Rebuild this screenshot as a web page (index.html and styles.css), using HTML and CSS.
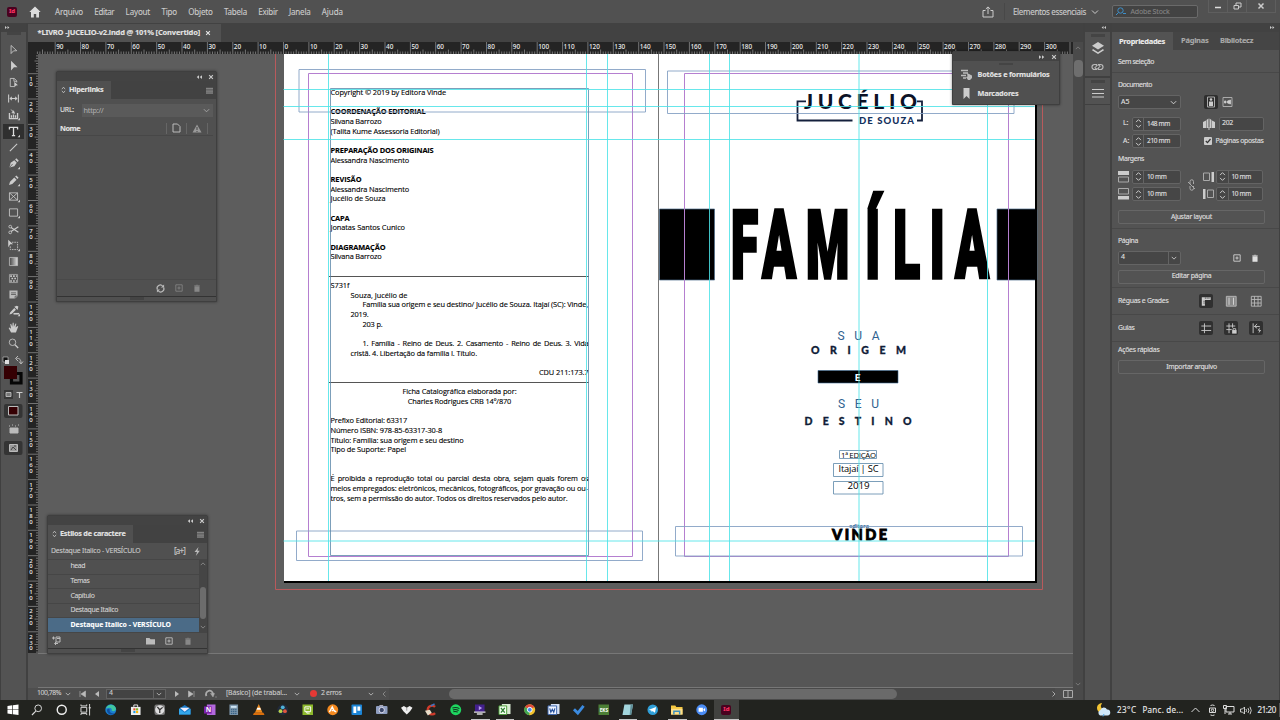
FILE: index.html
```html
<!DOCTYPE html>
<html lang="pt-BR">
<head>
<meta charset="utf-8">
<title>LIVRO -JUCELIO-v2.indd</title>
<link rel="stylesheet" href="styles.css">
</head>
<body>

<svg class="symbols">
  <symbol id="chev" viewBox="0 0 8 8"><path d="M1 2.500l3 3 3-3" fill="none" stroke="currentColor"/></symbol>
  <symbol id="close" viewBox="0 0 8 8"><path d="M1.500 1.500l5 5M6.500 1.500l-5 5" stroke="currentColor" stroke-width="1.500"/></symbol>
  <symbol id="dleft" viewBox="0 0 8 8"><path d="M4 1.500v5L1 4zM8 1.500v5L5 4z" fill="currentColor"/></symbol>
  <symbol id="dright" viewBox="0 0 8 8"><path d="M0 1.500v5L3 4zM4 1.500v5L7 4z" fill="currentColor"/></symbol>
  <symbol id="menu" viewBox="0 0 8 8"><path d="M0 1.500h8M0 3.500h8M0 5.500h8M0 7h8" stroke="currentColor" stroke-width=".9"/></symbol>
  <symbol id="updown" viewBox="0 0 6 10"><path d="M1 4l2-2.500L5 4M1 6l2 2.500L5 6" fill="none" stroke="currentColor" stroke-width=".8"/></symbol>
  <symbol id="spin" viewBox="0 0 10 14"><path d="M1.500 5L5 1.500 8.500 5M1.500 9L5 12.500 8.500 9" fill="none" stroke="currentColor" stroke-width="1.200"/></symbol>
  <symbol id="plus" viewBox="0 0 10 10"><path d="M1 1h8v8H1zM5 3v4M3 5h4" fill="none" stroke="currentColor"/></symbol>
  <symbol id="trash" viewBox="0 0 10 10"><path d="M1.500 2h7M3.500 1.500h3M2.200 3h5.600v6.500H2.200z" fill="currentColor" stroke="currentColor" stroke-width=".7"/></symbol>
</svg>

<div class="menubar">
  <div class="id-logo">Id</div>
  <svg class="home" viewBox="0 0 12 12"><path d="M6 .5L.3 6H2v5.500h2.800V8h2.400v3.500H10V6h1.700z" fill="#ddd"/></svg>
  <div class="menus">
    <span data-w="28">Arquivo</span><span data-w="20">Editar</span><span data-w="24.500">Layout</span><span data-w="15.500">Tipo</span><span data-w="24.500">Objeto</span><span data-w="23">Tabela</span><span data-w="19.500">Exibir</span><span data-w="21.500">Janela</span><span data-w="21">Ajuda</span>
  </div>
  <svg class="share" viewBox="0 0 12 12"><path d="M3.500 4.500H1v6.500h10V4.500H8.500M6 8V1M3.800 3L6 .9 8.200 3" fill="none" stroke="#ccc"/></svg>
  <div class="workspace"><span data-w="73">Elementos essenciais</span><svg width="8" height="8"><use href="#chev"/></svg></div>
  <div class="stock"><svg width="12" height="9" viewBox="0 0 12 9"><circle cx="5.500" cy="3.500" r="2.700" fill="none" stroke="#3d8fc9"/><path d="M3.500 5.500L1 8M8 6.500h3" stroke="#3d8fc9"/></svg><span data-w="39">Adobe Stock</span></div>
  <div class="winbtns">
    <span><svg width="8" height="8"><path d="M1 5.500h6" stroke="#ddd" stroke-width="1.500"/></svg></span>
    <span><svg width="9" height="8"><path d="M1 3.500h4.500v3.500H1zM3 3V1h5v4H6" fill="none" stroke="#ccc"/></svg></span>
    <span><svg width="8" height="8"><use href="#close"/></svg></span>
  </div>
</div>

<div class="main">
  <div class="toolcol">
    <div class="colhead left"><svg width="5" height="5"><use href="#dright"/></svg></div>
    <i class="grip"></i>
    <div class="tools">
      <svg viewBox="0 0 16 16"><path d="M5 3l7 6.500-4 .2L5 13z" fill="none" stroke="#ccc"/></svg>
      <svg viewBox="0 0 16 16"><path d="M5 2l8 8-4.500.3L5 14z" fill="#ccc"/></svg>
      <svg viewBox="0 0 16 16"><path d="M9 13H4V3h5l3 3v2M8.500 3v3.500H12" fill="none" stroke="#ccc"/><path d="M9 7l4.500 4.500-2.500.2L9 14z" fill="#ccc"/></svg>
      <svg viewBox="0 0 16 16"><path d="M2 3v10M14 3v10M4 8h8M6 6L4 8l2 2M10 6l2 2-2 2" fill="none" stroke="#ccc" stroke-width="1.300"/></svg>
      <svg viewBox="0 0 16 16"><path d="M3 6v7h10V6M5.500 12V9M8 12V8M10.500 12V9" fill="none" stroke="#ccc" stroke-width="1.600"/><path d="M4 1l4 3V2l2 5-5-1 2-1z" fill="#ccc"/><path d="M16 12v3h-3z" fill="#ccc"/></svg>
      <svg class="on" viewBox="0 0 16 16"><path d="M3 5.500V3h10v2.500M8 3v10M6 13h4" fill="none" stroke="#ddd" stroke-width="1.600"/><path d="M16 12v3h-3z" fill="#ccc"/></svg>
      <svg viewBox="0 0 16 16"><path d="M3.500 12.500l9-9" stroke="#ccc" stroke-width="1.300"/></svg>
      <svg viewBox="0 0 16 16"><path d="M3 13l1.500-6L9 4l3 3-3 4.500zM10 3l1.500-1.500 3 3L13 6z" fill="#ccc"/><path d="M3 13l4-4.500" stroke="#535353"/><path d="M16 12v3h-3z" fill="#ccc"/></svg>
      <svg viewBox="0 0 16 16"><path d="M2.500 13.500l1.200-4L9 4.200 11.800 7 6.500 12.300zM10 3.200l1.500-1.500 2.800 2.800L12.800 6z" fill="#ccc"/><path d="M16 12v3h-3z" fill="#ccc"/></svg>
      <svg viewBox="0 0 16 16"><path d="M3 3.500h10v9H3zM3 3.500l10 9M13 3.500l-10 9" fill="none" stroke="#ccc"/><path d="M16 12v3h-3z" fill="#ccc"/></svg>
      <svg viewBox="0 0 16 16"><path d="M3 3.500h10v9H3z" fill="none" stroke="#ccc"/><path d="M16 12v3h-3z" fill="#ccc"/></svg>
      <svg viewBox="0 0 16 16"><path d="M5 5.500l9 6M5 10.500l9-6" stroke="#ccc" stroke-width="1.400"/><circle cx="4" cy="4.500" r="1.700" fill="none" stroke="#ccc"/><circle cx="4" cy="11.500" r="1.700" fill="none" stroke="#ccc"/></svg>
      <svg viewBox="0 0 16 16"><path d="M1.500 1l6 5.500H4L1.500 10z" fill="#ccc"/><path d="M6 4h7v9H4V9" fill="none" stroke="#ccc" stroke-dasharray="2 1"/><path d="M16 12v3h-3z" fill="#ccc"/></svg>
      <svg viewBox="0 0 16 16"><defs><linearGradient id="g"><stop stop-color="#444"/><stop offset="1" stop-color="#ddd"/></linearGradient></defs><path d="M3 3h10v10H3z" fill="url(#g)" stroke="#bbb"/></svg>
      <svg viewBox="0 0 16 16"><path d="M3 3h10v10H3z" fill="none" stroke="#aaa"/><path d="M4 5h8M4 11h8" stroke="#ccc" stroke-width="2" stroke-dasharray="2 1.500"/><path d="M5.500 8h6" stroke="#ccc" stroke-width="2" stroke-dasharray="2 1.500"/></svg>
      <svg viewBox="0 0 16 16"><path d="M3 3h10v7l-3 3H3z" fill="#bbb"/><path d="M5 6h6M5 8h6M10 13v-3h3" stroke="#555" fill="none"/></svg>
      <svg viewBox="0 0 16 16"><path d="M3 13l1-3 5-5 2 2-5 5zM9 3.500l4 4 1-4.500-2-1z" fill="#ccc"/><path d="M8 12h7" stroke="#ccc" stroke-width="2"/><path d="M16 12v3h-3z" fill="#ccc"/></svg>
      <svg viewBox="0 0 16 16"><path d="M5 14L2 8.500l1-.5 2 1.500L4 4l1-.5L6.500 7 7 2h1.200l.3 5L10.500 3l1 .4L10.500 8l2.500-2 .8.700L11 14z" fill="#ccc"/></svg>
      <svg viewBox="0 0 16 16"><circle cx="6.800" cy="6.500" r="4" fill="none" stroke="#ccc"/><path d="M9.800 9.500l4 4" stroke="#ccc" stroke-width="1.500"/></svg>
    </div>
    <svg class="swatches" viewBox="0 0 26 104">
      <path d="M3 5h5v5H3z" fill="#111" stroke="#ccc" stroke-width=".6"/><path d="M5 8h4v4H5z" fill="#ddd"/>
      <path d="M16.500 6.500c3-.5 4.500 1 4.500 4.500M18 4l-2.500 2.500L18 9M19 9.500l2 2.500 2-2.500" fill="none" stroke="#bbb"/>
      <path d="M11.500 21.500h9.500v9.500h-9.500z" fill="none" stroke="#060606" stroke-width="3.200"/><path d="M4 14h13v13H4z" fill="#350003"/>
      <path d="M4 38h9v9H4z" fill="#383838"/><path d="M6 40.500h5v4H6z" fill="#777" stroke="#ccc" stroke-width=".8"/>
      <path d="M16.500 40.500h6M19.500 40v6" stroke="#ccc" stroke-width="1.200"/>
      <rect x="4" y="52" width="18.500" height="14" rx="2" fill="#343434"/><path d="M8.500 54.500h9.500v8.500H8.500z" fill="#350003" stroke="#bbb"/>
      <path d="M10 76h8v5h-8zM9 74h1M12 73h1M15 74h1M18 73h1" fill="#bbb" stroke="#bbb"/>
      <rect x="4" y="89" width="18.500" height="14" rx="2" fill="#343434"/><path d="M9.500 92.500h8v7h-8z" fill="#999" stroke="#bbb"/><path d="M11 98l2-3 3 3M14 94h2" stroke="#444" fill="none"/>
    </svg>
  </div>

  <div class="docarea">
    <div class="doctabs"><div class="doctab"><span data-w="162.500">*LIVRO -JUCELIO-v2.indd @ 101% [Convertido]</span><svg width="6" height="6"><use href="#close"/></svg></div></div>
    <div class="work">
      <div class="viewer">
        <svg class="hruler" id="hruler" viewBox="28 42 1045 12"></svg>
        <div class="lower">
          <svg class="vruler" id="vruler" viewBox="28 54 10 599"></svg>
          <div class="canvas">
            <div class="spread">
              <div class="page">
                <p><span data-w="115.500">Copyright © 2019 by Editora Vinde</span></p>
                <p></p>
                <p><b data-w="95">COORDENAÇÃO EDITORIAL</b></p>
                <p><span data-w="51">Silvana Barrozo</span></p>
                <p><span data-w="109">(Talita Kume Assessoria Editorial)</span></p>
                <p></p>
                <p><b data-w="103">PREPARAÇÃO DOS ORIGINAIS</b></p>
                <p><span data-w="78.500">Alessandra Nascimento</span></p>
                <p></p>
                <p><b data-w="31">REVISÃO</b></p>
                <p><span data-w="78.500">Alessandra Nascimento</span></p>
                <p><span data-w="55">Jucélio de Souza</span></p>
                <p></p>
                <p><b data-w="19">CAPA</b></p>
                <p><span data-w="74.500">Jonatas Santos Cunico</span></p>
                <p></p>
                <p><b data-w="55">DIAGRAMAÇÃO</b></p>
                <p><span data-w="51">Silvana Barrozo</span></p>
                <p></p>
                <p></p>
                <p><span data-w="19">S731f</span></p>
                <p class="in1"><span data-w="57">Souza, Jucélio de</span></p>
                <p class="in2"><span data-w="225.500">Família sua origem e seu destino/ Jucélio de Souza. Itajaí (SC): Vinde,</span></p>
                <p class="in1"><span data-w="18">2019.</span></p>
                <p class="in2"><span data-w="20">203 p.</span></p>
                <p></p>
                <p class="in2 just">1. Família - Reino de Deus. 2. Casamento - Reino de Deus. 3. Vida</p>
                <p class="in1"><span data-w="126.500">cristã. 4. Libertação da família I. Título.</span></p>
                <p></p>
                <p class="right"><span data-w="49.500">CDU 211:173.7</span></p>
                <p></p>
                <p class="center"><span data-w="114">Ficha Catalográfica elaborada por:</span></p>
                <p class="center"><span data-w="103.500">Charles Rodrigues CRB 14º/870</span></p>
                <p></p>
                <p><span data-w="76.500">Prefixo Editorial: 63317</span></p>
                <p><span data-w="111.500">Número ISBN: 978-85-63317-30-8</span></p>
                <p><span data-w="133">Título: Família: sua origem e seu destino</span></p>
                <p><span data-w="75.500">Tipo de Suporte: Papel</span></p>
                <p></p>
                <p></p>
                <p class="just">É proibida a reprodução total ou parcial desta obra, sejam quais forem os</p>
                <p><span data-w="257.500">meios empregados: eletrônicos, mecânicos, fotográficos, por gravação ou ou-</span></p>
                <p><span data-w="237">tros, sem a permissão do autor. Todos os direitos reservados pelo autor.</span></p>
              </div>
            </div>

            <svg class="overlay" viewBox="38 54 1035 599">
              <!-- capa interna -->
              <g fill="none" stroke="#14203c" stroke-width="1.800">
                <path d="M806 101.300h-8.500v19.200h55M917 101.300h5v19.200h-5"/>
              </g>
              <text class="geo" x="804" y="108.700" font-size="21" textLength="113" fill="#0c1226">JUCÉLIO</text>
              <text class="geo" x="859" y="123.700" font-size="9.500" textLength="55" fill="#14305c">DE SOUZA</text>
              <path d="M659.500 209h55v71h-55zM997 209h40v71h-40z" stroke="#4a6b8a" stroke-width=".7"/>
              <text class="big" transform="translate(0 278.300) scale(.52 1)" x="1406 1466 1550 1664 1718 1788 1837">FAMÍLIA</text>
              <text class="thin" x="837.500" y="339.500" textLength="42">SUA</text>
              <text class="geo" x="811" y="354" font-size="10.500" textLength="95" fill="#101d38" stroke="#101d38" stroke-width=".3">ORIGEM</text>
              <path d="M818 370.500h80V383h-80z" stroke="#3c6a92" stroke-width=".6"/>
              <text class="geo" x="854.800" y="380.500" font-size="10" fill="#fff">E</text>
              <text class="thin" x="838" y="408.200" textLength="41">SEU</text>
              <text class="geo" x="804.500" y="424.800" font-size="10.500" textLength="107" fill="#101d38" stroke="#101d38" stroke-width=".3">DESTINO</text>
              <text x="841" y="457.700" font-size="7.800" textLength="35">1ª EDIÇÃO</text>
              <text x="838.500" y="472" font-size="9.300" textLength="40">Itajaí | SC</text>
              <text x="847.500" y="489.300" font-size="9.800" textLength="22">2019</text>
              <text x="849" y="527.700" font-size="6" font-weight="700" textLength="20" fill="#3a6c9c">editora</text>
              <text class="geo" x="832" y="540.300" font-size="14.500" textLength="55" fill="#000" stroke="#000" stroke-width=".9">VINDE</text>

              <path d="M329 276.500h260M329 382.500h260" stroke="#555"/>
              <path d="M275.500 54v535.500h767V54" fill="none" stroke="#b85a5c"/>
              <path d="M284 582h752V54" fill="none" stroke="#000" stroke-width="2"/>
              <path d="M658.500 54v527" stroke="#777"/>
              <g fill="none" stroke="#b57fd0"><path d="M308.500 73.500h324v483h-324zM684.500 73.500h324v483h-324z"/></g>
              <g fill="none" stroke="#86a2c4" stroke-width=".9"><path d="M299 69.500h346.500v42.500h-346.500zM296.500 531h346v29.500h-346zM667.500 71h346.500v42.500h-346.500zM675.500 526.500h347v29.500h-347z"/></g>
              <g fill="none" stroke="#5a86a8" stroke-width=".8"><path d="M330.500 88.500h258v467h-258zM839.500 450.500h37v8h-37zM833.500 463.500h49.500v13h-49.500zM833.500 481.500h49.500v12.500h-49.500z"/></g>
              <path d="M283.500 89.500h751M283.500 106.500h751M283.500 139.500h751M283.500 541h751M328.500 54v527M586.500 54v527M607.500 54v527M709.500 54v527M729.500 54v527M859 54v527M987.500 54v527" stroke="#4ce3e8" stroke-opacity=".85"/>
            </svg>

            <div class="float links">
              <div class="fhead"><svg width="6" height="6"><use href="#dleft"/></svg><svg width="6" height="6"><use href="#close"/></svg></div>
              <div class="ftabs"><div class="ftab"><svg width="5" height="8"><use href="#updown"/></svg><b data-w="34.500">Hiperlinks</b></div><svg class="fmenu" width="7" height="7"><use href="#menu"/></svg></div>
              <div class="url"><span data-w="14">URL:</span><div class="urlbox"><span data-w="20">http://</span><svg width="7" height="7"><use href="#chev"/></svg></div></div>
              <div class="cols"><b data-w="20">Nome</b>
                <span><svg width="9" height="10" viewBox="0 0 9 10"><path d="M1 1h4.500L8 3.500V9H1z" fill="none" stroke="#bbb"/></svg></span>
                <span><svg width="10" height="9" viewBox="0 0 10 9"><path d="M5 .500L9.500 8.500h-9z" fill="#999"/><path d="M5 3v3M5 7v1" stroke="#444"/></svg></span><span class="last"></span></div>
              <div class="blank"></div>
              <div class="ffoot"><svg width="9" height="9" viewBox="0 0 10 10"><path d="M1.500 6A3.500 3.500 0 0 1 7.500 2.500M8.500 4A3.500 3.500 0 0 1 2.500 7.500" fill="none" stroke="#bbb" stroke-width="1.300"/><path d="M9 .5v3.500H5.500zM1 9.500V6h3.500z" fill="#bbb"/></svg><svg class="dim" width="8" height="8"><use href="#plus"/></svg><svg class="dim" width="8" height="8"><use href="#trash"/></svg></div>
              <div class="fend"><i class="grip"></i></div>
            </div>

            <div class="float styles">
              <div class="fhead"><svg width="6" height="6"><use href="#dleft"/></svg><svg width="6" height="6"><use href="#close"/></svg></div>
              <div class="ftabs"><div class="ftab"><svg width="5" height="8"><use href="#updown"/></svg><b data-w="65.500">Estilos de caractere</b></div><svg class="fmenu" width="7" height="7"><use href="#menu"/></svg></div>
              <div class="current"><span data-w="89.500">Destaque Italico - VERSÍCULO</span><em data-w="11">[a+]</em><svg width="6" height="9" viewBox="0 0 6 9"><path d="M4.500 0L.5 5H3L1.800 9 5.800 3.800H3.500z" fill="#bbb"/></svg></div>
              <div class="listwrap">
                <div class="list">
                  <div><span data-w="14.500">head</span></div>
                  <div><span data-w="19">Temas</span></div>
                  <div><span data-w="24">Capítulo</span></div>
                  <div><span data-w="47.500">Destaque Italico</span></div>
                  <div class="sel"><span data-w="100.500">Destaque Italico - VERSÍCULO</span></div>
                </div>
                <div class="lscroll"><svg width="6" height="6" class="flip"><use href="#chev"/></svg><i></i><svg width="6" height="6"><use href="#chev"/></svg></div>
              </div>
              <div class="ffoot2"><svg width="9" height="9" viewBox="0 0 9 9"><path d="M0 2h3M1.500 .5v3M4 1h4v5H4zM5 2.500h3M3 7.500h3M4 6l-1.500 1.500L4 9" fill="none" stroke="#bbb"/></svg><svg class="folder" width="9" height="8" viewBox="0 0 9 8"><path d="M0 1h3.500l1 1.200H9V7.500H0z" fill="#bbb"/></svg><svg width="8" height="8"><use href="#plus"/></svg><svg class="dim" width="8" height="8"><use href="#trash"/></svg></div>
              <div class="fend"><i class="grip"></i></div>
            </div>

            <div class="float forms">
              <div class="fhead"><svg width="6" height="6"><use href="#dright"/></svg><svg width="6" height="6"><use href="#close"/></svg></div>
              <i class="grip"></i>
              <div class="frow"><svg width="11" height="11" viewBox="0 0 11 11"><path d="M0 1.500h7M2 4h5M0 6.500h5M2 9h3" stroke="#bbb" stroke-width="1.300"/><path d="M6 4l2 1 3 1.500V9l-2 2H7L5 8l1.500-.5z" fill="#bbb"/></svg><b data-w="72">Botões e formulários</b></div>
              <div class="frow"><svg width="11" height="11" viewBox="0 0 11 11"><path d="M2.500 0h6v11l-3-3-3 3z" fill="#ccc"/></svg><b data-w="41">Marcadores</b></div>
            </div>
          </div>
        </div>
        <div class="pasteend"></div>
        <div class="status">
          <span class="zoomv" data-w="24">100,78%</span><svg width="6" height="6"><use href="#chev"/></svg>
          <svg class="first" width="7" height="6"><path d="M1 0v6M6.500 0v6L2 3z" fill="#bbb" stroke="#bbb" stroke-width=".6"/></svg>
          <svg class="prev" width="5" height="6"><path d="M4 0v6L0 3z" fill="#bbb"/></svg>
          <div class="pagebox"><span>4</span><i><svg width="6" height="6"><use href="#chev"/></svg></i></div>
          <svg class="next" width="5" height="6"><path d="M0 0v6l4-3z" fill="#bbb"/></svg>
          <svg class="lastp" width="7" height="6"><path d="M6 0v6M.5 0v6L5 3z" fill="#bbb" stroke="#bbb" stroke-width=".6"/></svg>
          <svg class="arc" width="12" height="9" viewBox="0 0 12 9"><path d="M1.500 7A3.500 3.500 0 1 1 8 5.500" fill="none" stroke="#aaa" stroke-width="1.800"/><path d="M5.500 4.500h4L8 8zM10 8h2" fill="#aaa" stroke="#aaa" stroke-width=".5"/></svg>
          <span data-w="61">[Básico] (de trabal...</span><svg class="sp1" width="6" height="6"><use href="#chev"/></svg>
          <i class="err"></i><span data-w="20.500">2 erros</span><svg class="sp2" width="6" height="6"><use href="#chev"/></svg><svg class="sp3" width="4" height="6"><path d="M3.500 0.500L1 3l2.500 2.500" fill="none" stroke="#888"/></svg>
          <div class="htrack"><i></i></div>
          <svg class="sp4" width="4" height="6"><path d="M.5 .5L3 3 .5 5.500" fill="none" stroke="#aaa"/></svg>
          <svg class="split" width="10" height="8"><path d="M.5 .5h9v7h-9zM5 .5v7" fill="none" stroke="#aaa"/></svg>
        </div>
      </div>
      <div class="vscroll"><svg width="6" height="6" class="flip"><use href="#chev"/></svg><i></i><b></b><svg width="6" height="6"><use href="#chev"/></svg></div>
    </div>
  </div>

  <div class="dock">
    <div class="colhead"><svg width="5" height="5"><use href="#dleft"/></svg></div>
    <div class="dgroup g1"><i class="grip"></i>
      <svg width="12" height="13" viewBox="0 0 12 13"><path d="M6 0l6 3.700-6 3.700L0 3.700z" fill="#ccc"/><path d="M1 7l5 3.200L11 7l1 1.300-6 3.700-6-3.700z" fill="#ccc"/></svg>
      <svg width="13" height="8" viewBox="0 0 13 8"><path d="M6 1.500H3.500a2.500 2.500 0 0 0 0 5H6M7 1.500h2.500a2.500 2.500 0 0 1 0 5H7M5 4a2 2 0 0 1 4 0M8 4a2 2 0 0 1-4 0" fill="none" stroke="#bbb" stroke-width="1.200"/></svg></div>
    <div class="dgroup g2"><i class="grip"></i><svg width="12" height="10"><path d="M0 1.500h12M0 5.500h12M0 9h12" stroke="#ccc"/></svg></div>
  </div>

  <div class="props">
    <div class="colhead right"><svg width="5" height="5"><use href="#dright"/></svg></div>
    <div class="ptabs"><b class="act"><span data-w="46">Propriedades</span></b><b class="t2"><span data-w="27.500">Páginas</span></b><b class="t3"><span data-w="33">Bibliotecz</span></b></div>
    <div class="sec s0"><span data-w="36">Sem seleção</span></div>
    <div class="sec s1">
      <div class="ttl"><span data-w="34">Documento</span></div>
      <div class="row r1"><div class="sel5"><span>A5</span><svg width="7" height="7"><use href="#chev"/></svg></div>
        <svg class="ori" width="14" height="14"><rect width="14" height="14" rx="2" fill="#2e2e2e"/><path d="M3.500 2h7v10h-7z" fill="none" stroke="#aaa"/><circle cx="7" cy="4.500" r="1.300" fill="#ccc"/><path d="M5 6.500h4V11H5z" fill="#ccc"/></svg>
        <svg class="ori2" width="11" height="12"><path d="M1 1.500h9v9H1z" fill="none" stroke="#aaa"/><path d="M2.500 5h1.500v2H2.500zM5.500 5L8.500 4v4L5.500 7z" fill="#ccc" stroke="#ccc" stroke-width=".8"/></svg></div>
      <div class="row r2"><label>L:</label><div class="num"><svg width="7" height="11"><use href="#spin"/></svg><span data-w="23">148 mm</span></div>
        <svg class="pagesic" width="12" height="12"><path d="M0 4l3-1.500V10H0zM3.500 2l2-1.500V10h-2zM6.500 .5l2 1.500v8h-2zM9 2.500L12 4v6H9zM5.500 9.500h1V12h-1z" fill="#ccc"/></svg><div class="n202"><span data-w="11">202</span></div></div>
      <div class="row r3"><label>A:</label><div class="num"><svg width="7" height="11"><use href="#spin"/></svg><span data-w="23">210 mm</span></div>
        <svg class="check" width="8" height="8"><rect width="8" height="8" rx="1" fill="#ccc"/><path d="M1.800 4l1.700 1.700L6.500 2" fill="none" stroke="#333" stroke-width="1.200"/></svg><span data-w="48">Páginas opostas</span></div>
      <div class="ttl m"><span data-w="26">Margens</span></div>
      <div class="margins">
        <div>
          <div class="mrow"><svg width="11" height="12"><path d="M0 0h11v4H0z" fill="#ccc"/><path d="M.5 6h10v5H.5z" fill="none" stroke="#aaa"/></svg><div class="num"><svg width="7" height="11"><use href="#spin"/></svg><span data-w="19.500">10 mm</span></div></div>
          <div class="mrow"><svg width="11" height="12"><path d="M0 8h11v3.500H0z" fill="#ccc"/><path d="M.5 .5h10v5.500H.5z" fill="none" stroke="#aaa"/></svg><div class="num"><svg width="7" height="11"><use href="#spin"/></svg><span data-w="19.500">10 mm</span></div></div>
        </div>
        <svg class="chain" width="9" height="12" viewBox="0 0 9 12"><path d="M3 5V2.500a1.500 1.500 0 0 1 3.500 0V5M3 7v2.500a1.500 1.500 0 0 0 3.500 0V7M1 3l7 7" fill="none" stroke="#aaa"/></svg>
        <div>
          <div class="mrow"><svg width="11" height="12"><path d="M8.500 1H11v10H8.500z" fill="#ccc"/><path d="M.5 2h6v7.500h-6z" fill="none" stroke="#aaa"/></svg><div class="num"><svg width="7" height="11"><use href="#spin"/></svg><span data-w="19.500">10 mm</span></div></div>
          <div class="mrow"><svg width="11" height="12"><path d="M0 1h2.500v10H0z" fill="#ccc"/><path d="M4.500 2h6v7.500h-6z" fill="none" stroke="#aaa"/></svg><div class="num"><svg width="7" height="11"><use href="#spin"/></svg><span data-w="19.500">10 mm</span></div></div>
        </div>
      </div>
      <div class="btn"><span data-w="41">Ajustar layout</span></div>
    </div>
    <div class="sec s2">
      <div class="ttl"><span data-w="20">Página</span></div>
      <div class="row r4"><div class="sel4"><span>4</span><i><svg width="6" height="6"><use href="#chev"/></svg></i></div><svg class="pl" width="8" height="8"><use href="#plus"/></svg><svg width="8" height="8"><use href="#trash"/></svg></div>
      <div class="btn"><span data-w="39.500">Editar página</span></div>
    </div>
    <div class="sec s3"><span data-w="50.500">Réguas e Grades</span>
      <svg class="on" viewBox="0 0 14 14"><path d="M2 2.500h10v3H5.500V12H2z" fill="#ccc"/><path d="M6 2.500v2M8 2.500v2M10 2.500v2M3.500 7h2M3.500 9h2" stroke="#444" stroke-width=".7"/></svg>
      <svg viewBox="0 0 14 14"><path d="M1.500 1.500h11v11h-11z" fill="#888" stroke="#bbb"/><path d="M4.500 3v8M9.500 3v8" stroke="#ddd"/></svg>
      <svg viewBox="0 0 14 14"><path d="M1.500 1.500h11v11h-11zM5 1.500v11M9 1.500v11M1.500 5h11M1.500 9h11" fill="none" stroke="#bbb"/></svg></div>
    <div class="sec s4"><span data-w="16.500">Guias</span>
      <svg class="on" viewBox="0 0 14 14"><path d="M1.500 4.500h11M1.500 9.500h11M5 1.500v11" stroke="#ccc"/></svg>
      <svg class="on" viewBox="0 0 14 14"><path d="M1.500 4.500h10M1.500 8.500h6M4.500 1.500v11M8.500 1.500v5" stroke="#ccc"/><path d="M8 9h5v4H8z" fill="#ccc"/><path d="M9 9V7.500h3V9" fill="none" stroke="#ccc"/></svg>
      <svg class="on" viewBox="0 0 14 14"><path d="M3.500 1.500v11M5 5h6M8 2L5 5l3 2" fill="none" stroke="#ccc"/><path d="M11 6L8.500 9.500h2L9.500 13l3-4h-2z" fill="#ccc"/></svg></div>
    <div class="sec s5">
      <div class="ttl"><span data-w="41.500">Ações rápidas</span></div>
      <div class="btn"><span data-w="50.500">Importar arquivo</span></div>
    </div>
  </div>
</div>

<div class="taskbar">
  <div class="apps">
    <span><svg viewBox="0 0 12 12"><path d="M.5 2l5-.7v4.400h-5zM6.200 1.200L12 .4v5.300H6.200zM.5 6.300h5v4.400l-5-.7zM6.200 6.300H12v5.300l-5.800-.8z" fill="#fff"/></svg></span>
    <span><svg viewBox="0 0 12 12"><circle cx="7.500" cy="4.500" r="3.500" fill="none" stroke="#ddd"/><path d="M5 7.500L1 11.500" stroke="#ddd" stroke-width="1.200"/></svg></span>
    <span><svg viewBox="0 0 12 12"><circle cx="6" cy="6" r="4.700" fill="none" stroke="#eee" stroke-width="1.500"/></svg></span>
    <span><svg viewBox="0 0 12 12"><path d="M1 3.500h6v5H1zM1 .5v1.500h6V.5M1 11.500V10h6v1.500M10 0v12M9 4h2.500" fill="none" stroke="#ddd"/></svg></span>
    <span><svg viewBox="0 0 12 12"><circle cx="6" cy="6" r="5.700" fill="#1b7fd0"/><path d="M1 5C2 0 10-1 11.500 5c0 2.500-3 3-4.500 2 1-3-3-4-6-2z" fill="#3fc6a0"/><path d="M5 6c-1 3 3 5 6 3-2 3-8 3-9-2 0-2 2-3 3-1z" fill="#0f4fa0"/></svg></span>
    <span><svg viewBox="0 0 12 12"><path d="M1 3h10v8.500H1z" fill="#eee"/><path d="M4 3V1h4v2" fill="none" stroke="#eee"/><path d="M3.500 4.500h2.200v2.200H3.500z" fill="#e5512b"/><path d="M6.300 4.500h2.200v2.200H6.300z" fill="#7ab51d"/><path d="M3.500 7.300h2.200v2.200H3.500z" fill="#1c9be6"/><path d="M6.300 7.300h2.200v2.200H6.300z" fill="#fbb800"/></svg></span>
    <span><svg viewBox="0 0 12 12"><rect x=".5" y=".5" width="11" height="11" rx="2" fill="#777"/><circle cx="6" cy="6" r="4.800" fill="#ddd"/><path d="M3.500 3L6 6l3-2.500M6 6v3.500" fill="none" stroke="#333" stroke-width="1.300"/></svg></span>
    <span><svg viewBox="0 0 12 12"><path d="M0 5l6-4 6 4v6H0z" fill="#1678c9"/><path d="M1 4h10L6 8z" fill="#eef"/><path d="M0 5l6 4 6-4v6H0z" fill="#33a8ec"/></svg></span>
    <span><svg viewBox="0 0 12 12"><path d="M3 .5h9v11H3z" fill="#b368dd"/><path d="M0 2.500h8v7.500H0z" fill="#7a1fa8"/><text x="1.800" y="8.800" font-size="7" font-weight="700" fill="#fff">N</text></svg></span>
    <span><svg viewBox="0 0 12 12"><path d="M1.500 .5h9v11h-9z" fill="#7b95aa"/><path d="M3 2h6v2H3z" fill="#cfe6f5"/><path d="M3 6h6M3 8h6M3 10h6" stroke="#2d5a80" stroke-dasharray="1.500 .7"/></svg></span>
    <span><svg viewBox="0 0 12 12"><path d="M6 0l4 9H2z" fill="#ee8a1d"/><path d="M4.500 4h3l.8 2H3.700z" fill="#fff"/><path d="M1 9h10l1 2.500H0z" fill="#d96e0c"/></svg></span>
    <span><svg viewBox="0 0 12 12"><circle cx="6" cy="6" r="5.700" fill="#202a3a"/><circle cx="6" cy="3.500" r="2" fill="#4fb3d9"/><circle cx="3.700" cy="7.500" r="2" fill="#b7d24b"/><circle cx="8.300" cy="7.500" r="2" fill="#e0563f"/></svg></span>
    <span><svg viewBox="0 0 12 12"><path d="M.5 .5h11v11H.5z" fill="#8cb82b"/><path d="M3 3h6v5H3zM5 8v1.500h3" fill="none" stroke="#fff"/><path d="M4.500 5h3" stroke="#fff"/></svg></span>
    <span><svg viewBox="0 0 12 12"><circle cx="6" cy="6" r="5.700" fill="#f58a1f"/><path d="M2.500 8.500L5.500 3l2.500 5M5 7.500c1.500-2 3-1 4.500 1" fill="none" stroke="#fff" stroke-width="1.300"/></svg></span>
    <span><svg viewBox="0 0 12 12"><rect x=".5" y=".5" width="11" height="11" rx="1" fill="#1b85d6"/><path d="M2.500 2.500h3v7h-3zM6.700 2.500h3V7h-3z" fill="#fff"/></svg></span>
    <span><svg viewBox="0 0 12 12"><rect x="0" y="2" width="12" height="8.500" rx="1" fill="#8f9ec0"/><path d="M3.500 1h4v1.500h-4z" fill="#aab"/><circle cx="6" cy="6.300" r="2.800" fill="#3a4668" stroke="#dde"/></svg></span>
    <span><svg viewBox="0 0 12 12"><path d="M0 4l3-2 3 2 3-2 3 2-2.500 3.500L6 11 2.500 7.500z" fill="#eee"/><path d="M6 4v3" stroke="#999"/></svg></span>
    <span><svg viewBox="0 0 12 12"><path d="M10.500 3A4.500 4.500 0 1 0 10.500 9.500" fill="none" stroke="#d13c2c" stroke-width="2.600"/><path d="M0 7l5-1 2 3-4 3z" fill="#e8ddc8"/><path d="M6 2l4-2" stroke="#3b76c4" stroke-width="1.500"/></svg></span>
    <span><svg viewBox="0 0 12 12"><circle cx="6" cy="6" r="5.700" fill="#1ed760"/><path d="M2.500 4.200q4-1.200 7.300.6M3 6.200q3-1 6 .6M3.500 8q2.500-.7 4.600.5" fill="none" stroke="#12351f" stroke-width="1.100"/></svg></span>
    <span class="run"><svg viewBox="0 0 12 12"><path d="M1 .5h10v8H1z" fill="#43208c"/><path d="M5 2l3.500 2.300L5 6.500z" fill="#b89af0"/><path d="M0 8.500h12M3 10.500h6" stroke="#ddd" stroke-width="1.500"/></svg></span>
    <span class="run"><svg viewBox="0 0 12 12"><path d="M3 0h9v10.500H3z" fill="#d9ead3"/><path d="M0 2h8v9H0z" fill="#f3fff0" stroke="#4c9d3a"/><path d="M2 4l4 5M6 4L2 9" stroke="#2e7d32" stroke-width="1.400"/></svg></span>
    <span><svg viewBox="0 0 12 12"><circle cx="6" cy="6" r="5.700" fill="#f2c22d"/><path d="M6 6L1 3.200A5.700 5.700 0 0 1 11 3.200z" fill="#dd4b3a"/><path d="M6 6L1 3.200A5.700 5.700 0 0 0 5.500 11.700z" fill="#3fa653"/><circle cx="6" cy="6" r="2.500" fill="#4a8af0" stroke="#fff"/></svg></span>
    <span><svg viewBox="0 0 12 12"><path d="M3 0h9v10.500H3z" fill="#d6e2f5"/><path d="M0 2h9v9H0z" fill="#eef4ff" stroke="#3d66ac"/><path d="M1.800 4.500L3 8.500l1.500-3 1.500 3 1.200-4" fill="none" stroke="#24509c" stroke-width="1.200"/></svg></span>
    <span><svg viewBox="0 0 12 12"><path d="M1 5.500L5 9.500 11 2" fill="none" stroke="#3b8be0" stroke-width="3"/></svg></span>
    <span><svg viewBox="0 0 12 12"><path d="M.5 .5h11v11H.5z" fill="#4c7f36"/><text x="1.700" y="8" font-size="5" font-weight="700" fill="#fff">EKS</text></svg></span>
    <span class="run"><svg viewBox="0 0 12 12"><path d="M2.500 .5h9l-2 11H.5z" fill="#a4d6dd"/><path d="M9 .5h2.500l-2 11H8z" fill="#5f8f98"/></svg></span>
    <span><svg viewBox="0 0 12 12"><circle cx="6" cy="6" r="5.500" fill="#2f9fd8"/><path d="M2 6l7.500-3-1.200 6-2.500-1.800L5 8.500 4.700 7z" fill="#fff"/></svg></span>
    <span class="run"><svg viewBox="0 0 12 12"><path d="M0 1.500h4.500l1 1.500H12v8H0z" fill="#f5c842"/><path d="M0 5h12v6H0z" fill="#ffe08a"/><path d="M3 11V7.500h6V11" fill="none" stroke="#3a8fbf" stroke-width="1.500"/></svg></span>
    <span><svg viewBox="0 0 12 12"><circle cx="6" cy="6" r="5.700" fill="#4a8cf5"/><path d="M2.700 4h4.500v4H2.700zM7.700 5.500L9.500 4.300v3.400L7.700 6.500z" fill="#fff"/></svg></span>
    <span class="run cur"><div class="id-logo">Id</div></span>
  </div>
  <div class="tray">
    <svg width="14" height="14" viewBox="0 0 14 14"><path d="M5 0a5 5 0 1 0 4 8 5 5 0 0 1-4-8z" fill="#f3c433"/><path d="M3 12.500a3 3 0 0 1 .5-5.500 3.500 3.500 0 0 1 6.500-.5 3 3 0 0 1 .5 6z" fill="#cfe8fa"/><path d="M6 13.500l1-2.500" stroke="#4aa0e0"/></svg>
    <span class="temp" data-w="19.500">23°C</span><span class="cond" data-w="41">Panc. de...</span>
    <svg class="up" width="9" height="6"><path d="M.5 5L4.500 1l4 4" fill="none" stroke="#ddd"/></svg>
    <svg class="cam" width="9" height="12"><path d="M1.500 4h6v4.500h-6zM2.500 1.500q2-1 4 0M2.500 11q2 1 4 0" fill="none" stroke="#ddd"/><circle cx="4.500" cy="6.300" r="1.200" fill="none" stroke="#ddd"/></svg>
    <svg class="net" width="12" height="10"><path d="M3 1.500h8v5.500H3zM5 9h4M7 7v2M.5 .5h3v3h-3zM2 4v5" fill="none" stroke="#ddd"/></svg>
    <svg class="vol" width="12" height="9"><path d="M.5 3h2l2-2v7l-2-2h-2zM6 3q1 1.500 0 3M8 2q1.700 2.500 0 5M10 .8q2.500 3.700 0 7.400" fill="none" stroke="#ddd" stroke-width=".9"/></svg>
    <span class="clock" data-w="18.500">21:20</span>
  </div>
</div>

<script>
const PX = 2.537;   // pixels per mm at this zoom
const X0 = 283.5, Y0 = 48.3;

function horizontalRuler() {
  let d = '', labels = '';
  for (let mm = -97; mm <= 310; mm++) {
    const x = X0 + mm * PX;
    if (x > 1072) break;
    const top = mm % 10 == 0 ? 42 : mm % 5 == 0 ? 49.5 : 51.5;
    d += `M${x.toFixed(1)} ${top}V54`;
    if (mm % 10 == 0 && mm <= 300) {
      labels += `<text x="${(x + 1).toFixed(1)}" y="49.300">${Math.abs(mm)}</text>`;
    }
  }
  document.getElementById('hruler').innerHTML = `<path d="${d}" stroke="#aaa" stroke-width=".6"/>` + labels;
}

// labels on this ruler run downwards, one digit under the other
function verticalRuler() {
  let d = '', labels = '';
  for (let mm = 3; mm <= 238; mm++) {
    const y = Y0 + mm * PX;
    const left = mm % 10 == 0 ? 28 : mm % 5 == 0 ? 34.5 : 36;
    d += `M${left} ${y.toFixed(1)}H38`;
    if (mm % 10 == 0) labels += `<text x="31" y="${(y + 1).toFixed(1)}">${mm}</text>`;
  }
  document.getElementById('vruler').innerHTML = `<path d="${d}" stroke="#aaa" stroke-width=".6"/>` + labels;
}

// copyfit: spread the tracking so a label takes its set width
function fit(el) {
  const r = document.createRange();
  r.selectNodeContents(el);
  const diff = parseFloat(el.dataset.w) - r.getBoundingClientRect().width;
  el.style.letterSpacing = (diff / el.textContent.length).toFixed(3) + 'px';
}

horizontalRuler();
verticalRuler();
document.querySelectorAll('[data-w]').forEach(fit);
</script>
</body>
</html>
```
FILE: styles.css
```css
* { box-sizing: border-box; }
body {
  margin: 0;
  width: 1280px;
  height: 720px;
  overflow: hidden;
  display: flex;
  flex-direction: column;
  background: #535353;
  color: #e4e4e4;
  font-family: "Noto Sans", "Open Sans", sans-serif;
  font-size: 6.900px;
  line-height: 1;
  white-space: nowrap;
  -webkit-text-stroke: .1px;
}
svg { display: block; flex: none; overflow: visible; }
span, b, em, label { flex: none; }
em { font-style: normal; }
.symbols { position: absolute; width: 0; height: 0; }
.flip { transform: rotate(180deg); }
.dim { opacity: .45; }
.grip { display: block; width: 14px; height: 3px; background: #444; margin: 0 auto; }

/* menu bar */
.menubar { height: 23px; display: flex; align-items: center; background: #515151; padding-left: 7px; color: #ccc; }
.id-logo {
  width: 10px; height: 10px; border-radius: 2px;
  background: #49021f; color: #ff3366;
  font-size: 6px; font-weight: 700; line-height: 9px; text-align: center;
}
.home { width: 12px; height: 12px; margin-left: 11.500px; }
.menus { display: flex; gap: 11.300px; margin-left: 14.500px; font-size: 8px; width: 927px; }
.share { width: 12px; height: 12px; }
.workspace { display: flex; align-items: center; gap: 5px; margin-left: 10px; padding-left: 8px; border-left: 1px solid #484848; height: 17px; font-size: 8px; }
.stock { display: flex; align-items: center; gap: 3px; width: 86px; height: 13px; margin-left: 13.500px; padding-left: 2px; border: 1px solid #6a6a6a; border-radius: 2px; background: #434343; color: #858585; font-size: 7px; }
.winbtns { display: flex; margin-left: 10px; height: 23px; align-items: flex-start; }
.winbtns span { width: 19px; height: 13px; border: 1px solid #5e5e5e; border-top: 0; border-right: 0; display: flex; align-items: center; justify-content: center; }
.winbtns span:last-child { width: 30px; border-right: 1px solid #5e5e5e; }

.main { flex: 1; display: flex; min-height: 0; background: #414141; }
.colhead { height: 9px; background: #424242; display: flex; align-items: center; justify-content: flex-end; padding-right: 4px; color: #ccc; }
.colhead.left { justify-content: flex-start; padding-left: 4px; }

/* tools */
.toolcol { width: 26px; background: #535353; border-left: 1px solid #404040; }
.tools { padding-top: 8px; }
.tools svg { width: 13px; height: 13px; margin: 0 auto 3.330px; }
.tools .on { background: #2f2f2f; box-shadow: 0 0 0 1px #2f2f2f, 3px 0 0 1px #2f2f2f, -3px 0 0 1px #2f2f2f; }
.swatches { width: 26px; height: 104px; margin: -1.500px 0 0 -1px; }

/* document */
.docarea { width: 1055px; margin-left: 2px; display: flex; flex-direction: column; }
.doctabs { height: 19px; background: #424242; display: flex; }
.doctab { width: 193px; height: 18px; margin-top: 1px; background: #515151; display: flex; align-items: center; padding-left: 9.500px; gap: 5.500px; font-size: 7.500px; font-weight: 700; }
.work { flex: 1; display: flex; }
.viewer { width: 1045px; display: flex; flex-direction: column; background: #565656; }
.hruler { width: 1045px; height: 12px; background: #242424; overflow: hidden; }
.hruler text, .vruler text { font-size: 6.400px; fill: #eee; font-weight: 500; }
.lower { display: flex; height: 599px; }
.vruler { width: 10px; height: 599px; background: #242424; overflow: hidden; }
.vruler text { font-size: 6px; writing-mode: vertical-rl; text-orientation: upright; letter-spacing: -2.200px; }
.canvas { position: relative; width: 1035px; height: 599px; background: #5d5d5d; }
.overlay { position: absolute; left: 0; top: 0; width: 1035px; height: 599px; overflow: hidden; }
.overlay text { font-family: "Open Sans", "Noto Sans", sans-serif; }
.overlay .geo { font-family: Lato, sans-serif; font-weight: 900; }
.overlay .big { font-family: Roboto, sans-serif; font-weight: 900; font-size: 95px; stroke: #000; stroke-width: 3.600px; }
.overlay .thin { font-family: Roboto, sans-serif; font-size: 12px; fill: #2f618f; }

.spread { position: absolute; left: 245.500px; top: 0; width: 751px; height: 527px; background: #fff; color: #000; }
.page { width: 305px; padding: 34px 0 0 47px; font-family: "Open Sans", "Noto Sans", sans-serif; font-size: 7.400px; -webkit-text-stroke: .12px #000; }
.page p { margin: 0; height: 9.665px; line-height: 9.665px; }
.page .in1 { padding-left: 20px; }
.page .in2 { padding-left: 32px; }
.page .right { text-align: right; }
.page .center { text-align: center; }
.page .just { text-align: justify; text-align-last: justify; white-space: normal; letter-spacing: -.18px; }

/* floating panels */
.float { position: absolute; background: #505050; border: 1px solid #3f3f3f; box-shadow: 0 0 3px rgba(0, 0, 0, .45); border-radius: 2px 2px 0 0; display: flex; flex-direction: column; }
.fhead { height: 9px; background: #434343; display: flex; align-items: center; justify-content: flex-end; gap: 6px; padding-right: 2px; color: #ccc; }
.ftabs { height: 18px; background: #424242; display: flex; align-items: center; justify-content: space-between; padding-right: 3.500px; color: #aaa; }
.ftab { height: 18px; background: #505050; display: flex; align-items: center; gap: 3px; padding: 0 7px 0 4px; font-size: 7.300px; color: #e4e4e4; }
.fend { height: 5px; border-top: 1px solid #333; }
.links { left: 18px; top: 17px; width: 161px; height: 231px; }
.url { display: flex; align-items: center; height: 23px; padding-left: 3px; gap: 7.500px; }
.urlbox { width: 131px; height: 13px; background: #5a5a5a; display: flex; align-items: center; justify-content: space-between; padding: 0 3px 0 2px; color: #aaa; font-size: 7.300px; }
.cols { display: flex; height: 13.500px; align-items: center; padding-left: 3px; border-bottom: 1px solid #474747; margin: 0 3px 0 0; }
.cols b { width: 105.500px; font-size: 7.300px; }
.cols span { width: 20.500px; height: 11px; border-left: 1px solid #666; display: flex; align-items: center; justify-content: center; }
.blank { flex: 1; }
.ffoot { height: 17px; border-top: 1px solid #494949; display: flex; align-items: center; justify-content: flex-end; gap: 10px; padding-right: 15.500px; color: #ccc; }
.styles { left: 9px; top: 461px; width: 161px; height: 139px; }
.current { display: flex; align-items: center; height: 17px; padding-left: 3px; color: #ccc; border-bottom: 1px solid #464646; }
.current em { width: 11px; margin: 0 9.500px 0 33.500px; font-size: 8px; }
.listwrap { display: flex; height: 73px; }
.list { width: 150.500px; }
.list div { height: 14.600px; padding-left: 22.500px; display: flex; align-items: center; border-bottom: 1px solid #464646; color: #d4d4d4; }
.list .sel { background: #4b6b87; color: #fff; font-weight: 700; }
.lscroll { width: 8.500px; background: #454545; display: flex; flex-direction: column; align-items: center; padding: 1px 0; color: #999; }
.lscroll i { width: 6px; height: 32px; border-radius: 3px; background: #6c6c6c; margin: 20px 0 5px; }
.ffoot2 { flex: 1; display: flex; align-items: center; padding-left: 4px; color: #ccc; gap: 10.500px; }
.ffoot2 .folder { margin-left: 74px; }
.forms { left: 914px; top: -3px; width: 108px; height: 54px; }
.forms .grip { margin-top: 2px; height: 2px; flex: none; }
.frow { height: 18.700px; display: flex; align-items: center; padding: 1px 0 0 8px; gap: 5.500px; font-size: 7.300px; }

.pasteend { height: 34.500px; border-top: 1px solid #777; border-bottom: 1px solid #777; margin-left: 10px; }
.status { flex: 1; background: #4e4e4e; display: flex; align-items: center; padding-left: 9px; color: #ccc; }
.zoomv { margin-right: 4px; }
.first { margin-left: 7.500px; }
.prev { margin-left: 9px; }
.pagebox { width: 60px; height: 10px; margin-left: 6.500px; background: #434343; border: 1px solid #626262; display: flex; justify-content: space-between; padding-left: 2px; align-items: center; }
.pagebox i { border-left: 1px solid #626262; width: 12px; height: 8px; display: flex; align-items: center; justify-content: center; }
.next { margin-left: 9px; }
.lastp { margin-left: 8px; }
.arc { margin: 0 9px 0 10px; }
.sp1 { margin-left: 7px; }
.err { width: 7px; height: 7px; border-radius: 50%; background: #e53935; margin: 0 4px 0 10px; }
.sp2 { margin-left: 27px; }
.sp3 { margin-left: 7.500px; }
.htrack { width: 666.500px; margin-left: 3px; height: 12px; background: #4a4a4a; display: flex; align-items: center; }
.htrack i { width: 448px; height: 10px; margin-left: 60.500px; background: #6a6a6a; border-radius: 5px; }
.sp4 { margin-left: -3px; }
.split { margin-left: 7px; }
.vscroll { width: 10px; background: #4a4a4a; display: flex; flex-direction: column; align-items: center; padding-top: 3px; color: #888; }
.vscroll i { width: 9px; height: 17px; border-radius: 4px; background: #6e6e6e; margin-top: 9px; }
.vscroll b { height: 604px; }

/* dock */
.dock { width: 25px; margin-left: 2px; background: #525252; }
.dgroup { display: flex; flex-direction: column; align-items: center; border-bottom: 1px solid #404040; }
.g1 { height: 46px; padding-top: 2px; border-bottom-width: 2px; }
.g1 svg:first-of-type { margin: 5px 0 7.500px; }
.g2 { height: 27px; padding-top: 2px; }
.g2 svg { margin-top: 5px; }

/* properties */
.props { flex: 1; margin-left: 2px; background: #535353; border-right: 1px solid #404040; color: #e0e0e0; }
.ptabs { height: 18px; background: #454545; display: flex; align-items: center; font-size: 7.500px; color: #aaa; }
.ptabs b { flex: none; }
.act { height: 18px; width: 61px; background: #535353; color: #eee; line-height: 18px; padding-left: 7px; }
.t2 { margin-left: 8px; width: 39px; }
.sec { padding-left: 6px; border-bottom: 1px solid #484848; }
.s0 { height: 23px; line-height: 23px; }
.s1 { height: 156px; padding-top: 7px; }
.ttl { height: 10px; line-height: 10px; }
.row { display: flex; align-items: center; }
.r1 { height: 14px; margin-top: 5px; }
.sel5, .sel4, .num, .n202 { height: 14px; background: #464646; border: 1px solid #646464; border-radius: 2px; display: flex; align-items: center; }
.sel5 { width: 62.500px; justify-content: space-between; padding: 0 3px 0 2px; }
.ori { margin-left: 23px; }
.ori2 { margin-left: 4px; }
.r2 { margin-top: 7.500px; height: 14px; }
.row label { width: 13.500px; padding-left: 5px; }
.num { width: 49px; font-size: 6.500px; }
.num svg { margin: 0 1.500px 0 2px; }
.num span { border-left: 1px solid #646464; height: 12px; line-height: 12px; padding-left: 3px; }
.pagesic { margin-left: 22px; }
.n202 { width: 45px; margin-left: 4.500px; padding-left: 2px; }
.r3 { margin-top: 3.500px; height: 14px; }
.check { margin: 0 4px 0 23px; }
.m { margin-top: 6px; }
.margins { display: flex; margin-top: 5.500px; }
.mrow { display: flex; align-items: center; gap: 2.500px; height: 14px; margin-bottom: 3.500px; }
.chain { margin: 9px 7px 0 6px; }
.margins > div:last-child .num { width: 46.500px; }
.btn { width: 147px; height: 14px; border: 1px solid #666; border-radius: 2px; display: flex; align-items: center; justify-content: center; }
.margins + .btn { margin-top: 5.500px; }
.s2 { height: 59px; padding-top: 7px; }
.r4 { margin: 4.500px 0 5px; }
.sel4 { width: 62.500px; justify-content: space-between; padding-left: 2px; }
.sel4 i { width: 12px; height: 12px; border-left: 1px solid #646464; display: flex; align-items: center; justify-content: center; }
.pl { margin: 0 10px 0 52px; }
.s3, .s4 { height: 27px; display: flex; align-items: center; gap: 10.500px; }
.s3 > span, .s4 > span { width: 70px; }
.s3 svg, .s4 svg { width: 14.500px; height: 14.500px; border-radius: 2px; padding: 1px; }
.s3 .on, .s4 .on { background: #303030; }
.s5 { border: 0; padding-top: 3px; }
.s5 .btn { margin-top: 5px; }

/* taskbar */
.taskbar { height: 20px; background: #22231f; display: flex; align-items: center; justify-content: space-between; }
.apps { display: flex; height: 20px; }
.apps > span { width: 24.640px; height: 20px; display: flex; align-items: center; justify-content: center; }
.apps svg { width: 11.500px; height: 11.500px; }
.apps .run { border-bottom: 1.500px solid #c5c5c5; }
.apps .run:not(.cur) { width: 18.640px; margin: 0 3px; }
.apps .cur { background: #41423f; }
.tray { display: flex; align-items: center; width: 183px; font-size: 8px; color: #eee; border-right: 1px solid #555; }
.temp { margin-left: 6px; }
.cond { margin-left: 6px; }
.up { margin-left: 7px; }
.cam { margin-left: 8px; }
.net { margin-left: 6px; }
.vol { margin-left: 5px; }
.clock { margin-left: 6px; }
```
